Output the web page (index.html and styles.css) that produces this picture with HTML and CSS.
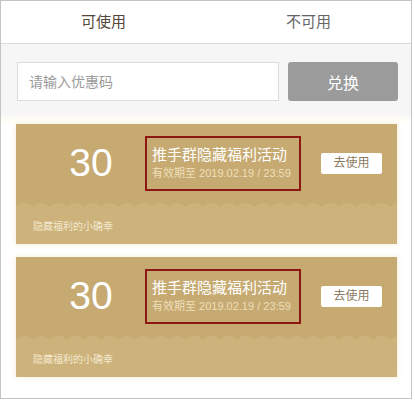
FILE: index.html
```html
<!DOCTYPE html>
<html lang="zh-CN">
<head>
    <meta charset="UTF-8">
    <meta name="viewport" content="width=device-width, initial-scale=1.0">
    <title>优惠券</title>
    <link rel="stylesheet" href="styles.css">
</head>
<body>
    <div class="page">
        <div class="tabs">
            <div class="tab active">可使用</div>
            <div class="tab">不可用</div>
        </div>
        <div class="exchange">
            <input type="text" class="code" placeholder="请输入优惠码">
            <button class="btn-exchange">兑换</button>
        </div>
        <div class="list">
            <div class="coupon">
                <div class="coupon-top">
                    <div class="num">30</div>
                    <div class="info">
                        <div class="title">推手群隐藏福利活动</div>
                        <div class="date">有效期至 2019.02.19 / 23:59</div>
                    </div>
                    <a class="use">去使用</a>
                </div>
                <div class="wave"></div>
                <div class="coupon-bottom">隐藏福利的小确幸</div>
            </div>
            <div class="coupon">
                <div class="coupon-top">
                    <div class="num">30</div>
                    <div class="info">
                        <div class="title">推手群隐藏福利活动</div>
                        <div class="date">有效期至 2019.02.19 / 23:59</div>
                    </div>
                    <a class="use">去使用</a>
                </div>
                <div class="wave"></div>
                <div class="coupon-bottom">隐藏福利的小确幸</div>
            </div>
        </div>
    </div>
</body>
</html>
```
FILE: styles.css
```css
body{
    margin: 0;
    font-family: "Liberation Sans", "Noto Sans CJK SC", sans-serif;
    background: #fff;
}
.page{
    width: 410px;
    height: 397px;
    border: 1px solid #c4c4c4;
    background: #fff;
}
.tabs{
    display: flex;
    height: 42px;
    border-bottom: 1px solid #dcdcdc;
}
.tab{
    flex: 1;
    text-align: center;
    line-height: 42px;
    font-size: 15px;
    color: #666;
}
.tab.active{
    color: #54473b;
}
.exchange{
    display: flex;
    gap: 9px;
    padding: 18px 12px 12px 16px;
    background: #f6f6f6;
}
.code{
    width: 262px;
    height: 39px;
    box-sizing: border-box;
    border: 1px solid #dcdcdc;
    background: #fff;
    padding: 0 11px;
    font-size: 14px;
    font-family: inherit;
    outline: none;
}
.code::placeholder{
    color: #9a9a9a;
}
.btn-exchange{
    width: 110px;
    height: 39px;
    border: none;
    border-radius: 3px;
    background: #9b9b9b;
    color: #fff;
    font-size: 16px;
    font-family: inherit;
}
.list{
    padding: 11px 14px 0 15px;
    background: linear-gradient(#f6f6f6, #fffdf5 7px, #fff 12px);
}
.coupon{
    margin-bottom: 13px;
    box-shadow: 0 0 5px rgba(235, 215, 165, 0.55);
}
.coupon-top{
    display: flex;
    align-items: center;
    height: 78px;
    padding: 0 15px 0 21px;
    background: #c6aa71;
}
.num{
    width: 108px;
    text-align: center;
    font-size: 39px;
    color: #fff;
}
.info{
    border: 2px solid #8f1711;
    padding: 7px 8px 8px 5px;
    color: #fff;
}
.title{
    font-size: 15px;
    line-height: 19px;
}
.date{
    margin-top: 2px;
    font-size: 11px;
    line-height: 15px;
    color: #efdfbb;
}
.use{
    margin-left: auto;
    width: 61px;
    height: 21px;
    line-height: 21px;
    text-align: center;
    font-size: 12px;
    color: #8c7b60;
    background: #fff;
    border-radius: 2px;
}
.wave{
    height: 5px;
    background: radial-gradient(8px 4px at 50% 100%, #cdb37b 90%, rgba(205, 179, 123, 0) 100%) 0 1px / 17px 4px repeat-x, #c6aa71;
}
.coupon-bottom{
    height: 37px;
    line-height: 39px;
    padding-left: 17px;
    font-size: 10px;
    color: #f3e8cf;
    background: #cdb37b;
}
```
